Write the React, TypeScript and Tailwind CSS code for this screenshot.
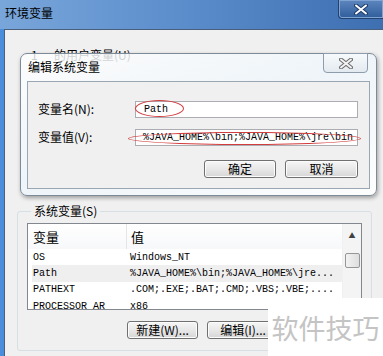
import React from 'react';

const cjk = "font-['Noto_Sans_CJK_SC',sans-serif]";
const mono = "font-['Liberation_Mono',monospace]";

function CloseGlyph({ stroke, fill }: { stroke: string; fill: string }) {
  return (
    <svg width="14" height="11" viewBox="0 0 14 11">
      <path d="M2 1.5 L12 9.5 M12 1.5 L2 9.5" stroke={stroke} strokeWidth="4" strokeLinecap="round" />
      <path d="M2 1.5 L12 9.5 M12 1.5 L2 9.5" stroke={fill} strokeWidth="2" strokeLinecap="round" />
    </svg>
  );
}

function WinButton({ label, w }: { label: string; w: string }) {
  return (
    <button className={`${w} h-[18px] rounded-[3px] border border-[#707070] bg-gradient-to-b from-[#f6f6f6] via-[#e8e8e8] to-[#d6d6d6] text-[12px] leading-none text-black shadow-[inset_0_0_0_1px_#fcfcfc]`}>
      {label}
    </button>
  );
}

const rows = [
  { name: 'OS', value: 'Windows_NT' },
  { name: 'Path', value: '%JAVA_HOME%\\bin;%JAVA_HOME%\\jre...', selected: true },
  { name: 'PATHEXT', value: '.COM;.EXE;.BAT;.CMD;.VBS;.VBE;....' },
  { name: 'PROCESSOR_AR', value: 'x86' }
];

export default function App() {
  return (
    <div className={`relative w-[383px] h-[356px] overflow-hidden bg-[#4a8edb] ${cjk}`}>
      {/* outer window title bar */}
      <div className="flex h-[29px] items-start justify-between bg-gradient-to-r from-[#79a6da] via-[#5a8ccb] to-[#3d6fb1]">
        <span className="pl-[5px] pt-[5px] text-[12px] leading-[16px] text-black">环境变量</span>
        <div className="flex h-[19px] w-[45px] items-center justify-center rounded-bl-[4px] border-b border-l border-[#23426f] bg-gradient-to-b from-[#5d86bd] to-[#2f5e9c] shadow-[inset_0_0_0_1px_#7fa3d3]">
          <CloseGlyph stroke="#1d3d6b" fill="#ffffff" />
        </div>
      </div>

      {/* outer window body */}
      <div className="ml-[4px] h-[327px] border-l border-t border-[#4a5f7c] bg-[#f0f0f0]">
        <div className="flex h-[173px] pl-[26px] pt-[17px] text-[12px] leading-[16px] text-black">
          <span className="w-[23px]">1</span>
          <span>的用户变量(U)</span>
        </div>
        <fieldset className="ml-[12px] w-[355px] rounded-[3px] border border-[#d5dfe5] px-[9px] pb-[11px] pt-[4px]">
          <legend className="ml-[4px] px-[3px] text-[12px] leading-[16px] text-black">系统变量(S)</legend>
          <div className="flex h-[87px] w-[335px] overflow-hidden border border-[#828790] bg-white">
            <div className="w-[315px]">
              <div className="flex h-[25px] items-center bg-gradient-to-b from-white to-[#f7f8fa] text-[13px] text-black">
                <span className="w-[99px] border-r border-[#e5e5e5] pl-[5px] leading-[25px]">变量</span>
                <span className="pl-[4px]">值</span>
              </div>
              {rows.map(r => (
                <div key={r.name} className={`ml-[4px] flex h-[16.3px] items-center whitespace-nowrap text-[10px] text-black ${mono} ${r.selected ? 'bg-[#efefef]' : ''}`}>
                  <span className="w-[98px] shrink-0 pl-[1px]">{r.name}</span>
                  <span className="shrink-0">{r.value}</span>
                </div>
              ))}
            </div>
            <div className="flex w-[19px] flex-col items-center border-l border-[#f0f0f0] bg-[#f4f4f4]">
              <span className="mt-[6px] text-[7px] leading-[10px] text-[#404040]">▲</span>
              <div className="mt-[13px] h-[15px] w-[15px] rounded-[2px] border border-[#969696] bg-gradient-to-r from-[#f2f2f2] to-[#dedede]" />
            </div>
          </div>
          <div className="mt-[11px] flex gap-[9px] pl-[100px]">
            <WinButton label="新建(W)..." w="w-[71px]" />
            <WinButton label="编辑(I)..." w="w-[72px]" />
          </div>
        </fieldset>
      </div>

      {/* edit dialog on top */}
      <div className="absolute left-[20px] top-[53px] h-[143px] w-[357px] rounded-[7px] border border-[#7d8a98] bg-gradient-to-br from-white/80 via-[#eef5fa]/90 to-white/90 shadow-[1px_2px_4px_rgba(0,0,0,0.35)]">
        <div className="h-[27px] pl-[7px] pt-[5px] text-[12px] leading-[16px] text-black">编辑系统变量</div>
        <div className="absolute left-[302px] top-[-1px] flex h-[20px] w-[45px] items-center justify-center rounded-b-[4px] border border-[#8e9cab] bg-gradient-to-b from-[#f7fafc] to-[#e3eaf0]">
          <CloseGlyph stroke="#6d6d6d" fill="#f4f4f4" />
        </div>
        <div className="ml-[6px] h-[108px] w-[343px] border border-[#9aa6b2] bg-[#f0f0f0] pl-[10px] pr-[11px] pt-[18px]">
          <div className="flex items-center">
            <span className="w-[97px] text-[12px] text-black">变量名(N):</span>
            <div className={`flex h-[17px] flex-1 items-center border border-[#abadb3] bg-white pl-[8px] text-[10px] text-black ${mono}`}>Path</div>
          </div>
          <div className="mt-[10px] flex items-center">
            <span className="w-[97px] text-[12px] text-black">变量值(V):</span>
            <div className={`flex h-[17px] flex-1 items-center overflow-hidden whitespace-nowrap border border-[#abadb3] bg-white pl-[7px] text-[10px] text-black ${mono}`}>%JAVA_HOME%\bin;%JAVA_HOME%\jre\bin</div>
          </div>
          <div className="mt-[14px] flex justify-end gap-[9px]">
            <WinButton label="确定" w="w-[72px]" />
            <WinButton label="取消" w="w-[73px]" />
          </div>
        </div>
      </div>

      {/* red annotation ellipses */}
      <div className="absolute left-[135px] top-[100px] h-[17px] w-[49px] rounded-[50%] border border-[#d23c3c]" />
      <div className="absolute left-[128px] top-[132px] h-[13px] w-[233px] rounded-[50%] border border-[#d23c3c]" />

      {/* watermark */}
      <div className="absolute left-[268px] top-[298px] flex h-[58px] w-[115px] items-center justify-center bg-white text-[27px] leading-none text-[#c4c4c4]">
        软件技巧
      </div>
    </div>
  );
}
